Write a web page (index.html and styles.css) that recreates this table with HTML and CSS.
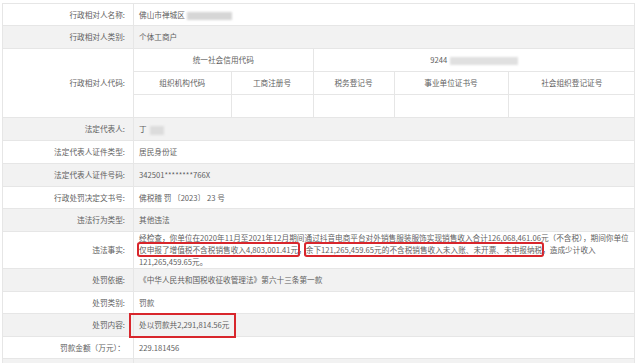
FILE: index.html
```html
<!DOCTYPE html>
<html lang="zh-CN">
<head>
<meta charset="utf-8">
<title>行政处罚信息</title>
<link rel="stylesheet" href="styles.css">
</head>
<body>
<table class="info">
  <colgroup><col class="c-label"><col class="c-val"></colgroup>
  <tr class="h22"><th>行政相对人名称:</th><td>佛山市禅城区<span class="blur blur-name"></span></td></tr>
  <tr class="alt h23"><th>行政相对人类别:</th><td>个体工商户</td></tr>
  <tr class="h69"><th>行政相对人代码:</th>
    <td class="nest-cell">
      <table class="nest">
        <colgroup><col class="n1"><col class="n2"><col class="n3"><col class="n4"><col class="n5"></colgroup>
        <tr><td colspan="2">统一社会信用代码</td><td colspan="3">9244<span class="blur blur-code"></span></td></tr>
        <tr><td>组织机构代码</td><td>工商注册号</td><td>税务登记号</td><td>事业单位证书号</td><td>社会组织登记证号</td></tr>
        <tr><td></td><td></td><td></td><td></td><td></td></tr>
      </table>
    </td>
  </tr>
  <tr class="alt h23"><th>法定代表人:</th><td>丁<span class="blur blur-person"></span></td></tr>
  <tr class="h23"><th>法定代表人证件类型:</th><td>居民身份证</td></tr>
  <tr class="alt h23"><th>法定代表人证件号码:</th><td>342501********766X</td></tr>
  <tr class="h22"><th>行政处罚决定文书号:</th><td>佛税稽 罚 〔2023〕 23 号</td></tr>
  <tr class="alt h23"><th>违法行为类型:</th><td>其他违法</td></tr>
  <tr class="h37"><th>违法事实:</th>
    <td class="fact">经检查，你单位在2020年11月至2021年12月期间通过抖音电商平台对外销售服装服饰实现销售收入合计126,068,461.06元（不含税），期间你单位<br><span class="mark">仅申报了增值税不含税销售收入4,803,001.41元</span>，<span class="mark">余下121,265,459.65元的不含税销售收入未入账、未开票、未申报纳税</span>，造成少计收入<br>121,265,459.65元。</td></tr>
  <tr class="alt h23"><th>处罚依据:</th><td>《中华人民共和国税收征收管理法》第六十三条第一款</td></tr>
  <tr class="h22"><th>处罚类别:</th><td>罚款</td></tr>
  <tr class="alt h23"><th>处罚内容:</th><td><span class="mark-big">处以罚款共2,291,814.56元</span></td></tr>
  <tr class="h22"><th>罚款金额（万元）：</th><td>229.181456</td></tr>
  <tr class="alt h23"><th></th><td></td></tr>
</table>
</body>
</html>
```
FILE: styles.css
```css
html, body {
  margin: 0;
  padding: 0;
  background: #fff;
}
body {
  padding: 3px 0 0 2px;
  font-family: "Noto Sans CJK SC", "Microsoft YaHei", sans-serif;
  font-size: 7.65px;
  color: #5f5f5f;
}
.info {
  width: 632px;
  border-collapse: collapse;
  table-layout: fixed;
}
.c-label { width: 131px; }
.c-val { width: 501px; }
.info > tbody > tr > th,
.info > tbody > tr > td {
  border: 1px solid #e6e6e6;
  padding: 0 0 0 5px;
  vertical-align: middle;
  text-align: left;
  font-weight: normal;
  line-height: 11.8px;
  white-space: nowrap;
}
.info > tbody > tr > th {
  text-align: right;
  padding: 0 8px 0 0;
}
.info > tbody > tr.alt > th,
.info > tbody > tr.alt > td {
  background: #f2f2f2;
}
.h22 { height: 22px; }
.h23 { height: 23px; }
.h37 { height: 37px; }
.h69 { height: 69px; }

.info > tbody > tr > td.nest-cell { padding: 0; }
.nest {
  width: 501px;
  border-collapse: collapse;
  table-layout: fixed;
}
.n1 { width: 97px; }
.n2 { width: 82px; }
.n3 { width: 81px; }
.n4 { width: 114px; }
.n5 { width: 127px; }
.nest td {
  height: 22px;
  border: 1px solid #e6e6e6;
  text-align: center;
  padding: 0;
}
.nest tr:first-child td { border-top: none; }
.nest tr:last-child td { border-bottom: none; }
.nest td:first-child { border-left: none; }
.nest td:last-child { border-right: none; }

.blur {
  display: inline-block;
  vertical-align: middle;
  background: #d6d6d6;
  filter: blur(1.2px);
}
.blur-name { width: 45px; height: 8px; margin-left: 2px; }
.blur-person { width: 14px; height: 9px; margin-left: 3px; background: #dcdcdc; }
.blur-code { width: 68px; height: 8px; margin-left: 3px; background: #e0e0e0; }

.mark {
  box-shadow: 0 0 0 2px #d8262c;
  border-radius: 1px;
}
.mark-big {
  display: inline-block;
  border: 2px solid #d8262c;
  padding: 4px 5px 5px 8px;
  margin: -3px 0 -3px -10px;
  line-height: 12px;
}
```
